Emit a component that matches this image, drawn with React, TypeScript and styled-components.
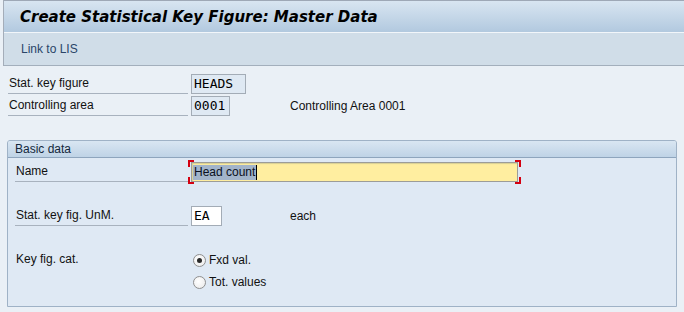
import React from "react";
import styled, { createGlobalStyle, css } from "styled-components";

const GlobalStyle = createGlobalStyle`
  body {
    margin: 0;
    background: #eaf0f6;
    font-family: "Liberation Sans", Arial, sans-serif;
    font-size: 12px;
    color: #111;
  }
`;

const Page = styled.div`
  width: 684px;
  height: 312px;
  overflow: hidden;
  background: #eaf0f6;
`;

const Header = styled.div`
  margin-left: 3px;
  border-left: 1px solid #a4adb9;
`;

const TitleBar = styled.div`
  height: 31px;
  border-top: 1px solid #9ea8b6;
  border-bottom: 1px solid #f2f6fa;
  background: linear-gradient(#d8e5f1, #b2c9df);
  display: flex;
  align-items: center;
  padding-left: 16px;
`;

const Title = styled.h1`
  margin: 0;
  font-family: "DejaVu Sans", Verdana, sans-serif;
  font-size: 15px;
  font-weight: bold;
  font-style: italic;
  color: #000;
`;

const Toolbar = styled.div`
  height: 32px;
  background: #d0dde8;
  border-bottom: 1px solid #a3afbc;
  display: flex;
  align-items: center;
  padding-left: 17px;
`;

const ToolLink = styled.span`
  color: #2a4568;
`;

const Content = styled.div`
  padding: 8px 7px 0 7px;
`;

const Fields = styled.div`
  padding-left: 1px;
`;

const Row = styled.div<{ $gap?: number }>`
  display: grid;
  grid-template-columns: 183px 99px auto;
  align-items: center;
  height: 20px;
  margin-top: ${(p) => p.$gap ?? 0}px;
`;

const Label = styled.div<{ $plain?: boolean }>`
  height: 20px;
  width: 180px;
  box-sizing: border-box;
  line-height: 19px;
  padding-left: 1px;
  white-space: nowrap;
  ${(p) =>
    !p.$plain &&
    css`
      border-bottom: 1px solid #a8b2be;
    `}
`;

const GroupLabel = styled(Label)`
  width: 173px;
`;

const Field = styled.div<{ $w: number; $bg?: string }>`
  width: ${(p) => p.$w}px;
  height: 20px;
  box-sizing: border-box;
  border: 1px solid #a3acb6;
  background: ${(p) => p.$bg ?? "#dfe9f3"};
  font-family: "DejaVu Sans Mono", "Liberation Mono", monospace;
  font-size: 13px;
  line-height: 18px;
  padding-left: 2px;
  color: #000;
`;

const Desc = styled.div`
  white-space: nowrap;
`;

const Group = styled.div`
  margin-top: 24px;
  border: 1px solid #9fb2c6;
  border-radius: 3px 3px 0 0;
  background: #dfe9f4;
  height: 167px;
  box-sizing: border-box;
`;

const GroupHead = styled.div`
  height: 16px;
  line-height: 16px;
  padding-left: 7px;
  background: linear-gradient(#d9e6f2, #bfd3e6);
  border-bottom: 1px solid #8ea5bd;
  border-radius: 2px 2px 0 0;
  color: #14283c;
`;

const GroupBody = styled.div`
  padding: 4px 0 0 7px;
`;

const GroupRow = styled(Row)`
  grid-template-columns: 176px 99px auto;
`;

const BracketWrap = styled.div`
  position: relative;
  width: 327px;
  height: 20px;
`;

const Corner = styled.span<{ $v: "top" | "bottom"; $h: "left" | "right" }>`
  position: absolute;
  width: 4px;
  height: 5px;
  border-color: #d40010;
  border-style: solid;
  border-width: 0;
  ${(p) => p.$v}: -2px;
  ${(p) => p.$h}: -3px;
  border-${(p) => p.$v}-width: 2px;
  border-${(p) => p.$h}-width: 2px;
`;

const NameInput = styled.div`
  width: 327px;
  height: 20px;
  box-sizing: border-box;
  border: 1px solid #9c9c98;
  box-shadow: inset 1px 1px 1px #d8cf94;
  background: #ffeea0;
  padding-left: 1px;
  display: flex;
  align-items: center;
`;

const Selected = styled.span`
  background: #a2b4ca;
  color: #0a1020;
  padding: 0 1px 0 1px;
  line-height: 15px;
  border-right: 1px solid #000;
`;

const RadioRow = styled.div`
  display: flex;
  align-items: center;
  gap: 3px;
  height: 20px;
  padding-left: 2px;
`;

const RadioDot = styled.span<{ $on?: boolean }>`
  width: 13px;
  height: 13px;
  box-sizing: border-box;
  border-radius: 50%;
  border: 1px solid #8f8f8f;
  background: radial-gradient(circle at 40% 40%, #ffffff, #e8e8e8);
  display: flex;
  align-items: center;
  justify-content: center;

  &::after {
    content: "";
    width: 5px;
    height: 5px;
    border-radius: 50%;
    background: ${(p) => (p.$on ? "#2a2a2a" : "transparent")};
  }
`;

const RadioGroup = styled.div`
  display: flex;
  flex-direction: column;
  gap: 2px;
`;

const CatBlock = styled.div`
  display: grid;
  grid-template-columns: 176px auto;
  margin-top: 24px;
`;

export default function App() {
  return (
    <Page>
      <GlobalStyle />
      <Header>
        <TitleBar>
          <Title>Create Statistical Key Figure: Master Data</Title>
        </TitleBar>
        <Toolbar>
          <ToolLink>Link to LIS</ToolLink>
        </Toolbar>
      </Header>
      <Content>
        <Fields>
          <Row>
            <Label>Stat. key figure</Label>
            <Field $w={55}>HEADS</Field>
          </Row>
          <Row $gap={2}>
            <Label>Controlling area</Label>
            <Field $w={39}>0001</Field>
            <Desc>Controlling Area 0001</Desc>
          </Row>
        </Fields>
        <Group>
          <GroupHead>Basic data</GroupHead>
          <GroupBody>
            <GroupRow>
              <GroupLabel>Name</GroupLabel>
              <BracketWrap>
                <NameInput>
                  <Selected>Head count</Selected>
                </NameInput>
                <Corner $v="top" $h="left" />
                <Corner $v="bottom" $h="left" />
                <Corner $v="top" $h="right" />
                <Corner $v="bottom" $h="right" />
              </BracketWrap>
            </GroupRow>
            <GroupRow $gap={24}>
              <GroupLabel>Stat. key fig. UnM.</GroupLabel>
              <Field $w={31} $bg="#ffffff">EA</Field>
              <Desc>each</Desc>
            </GroupRow>
            <CatBlock>
              <GroupLabel $plain>Key fig. cat.</GroupLabel>
              <RadioGroup>
                <RadioRow>
                  <RadioDot $on />
                  Fxd val.
                </RadioRow>
                <RadioRow>
                  <RadioDot />
                  Tot. values
                </RadioRow>
              </RadioGroup>
            </CatBlock>
          </GroupBody>
        </Group>
      </Content>
    </Page>
  );
}
